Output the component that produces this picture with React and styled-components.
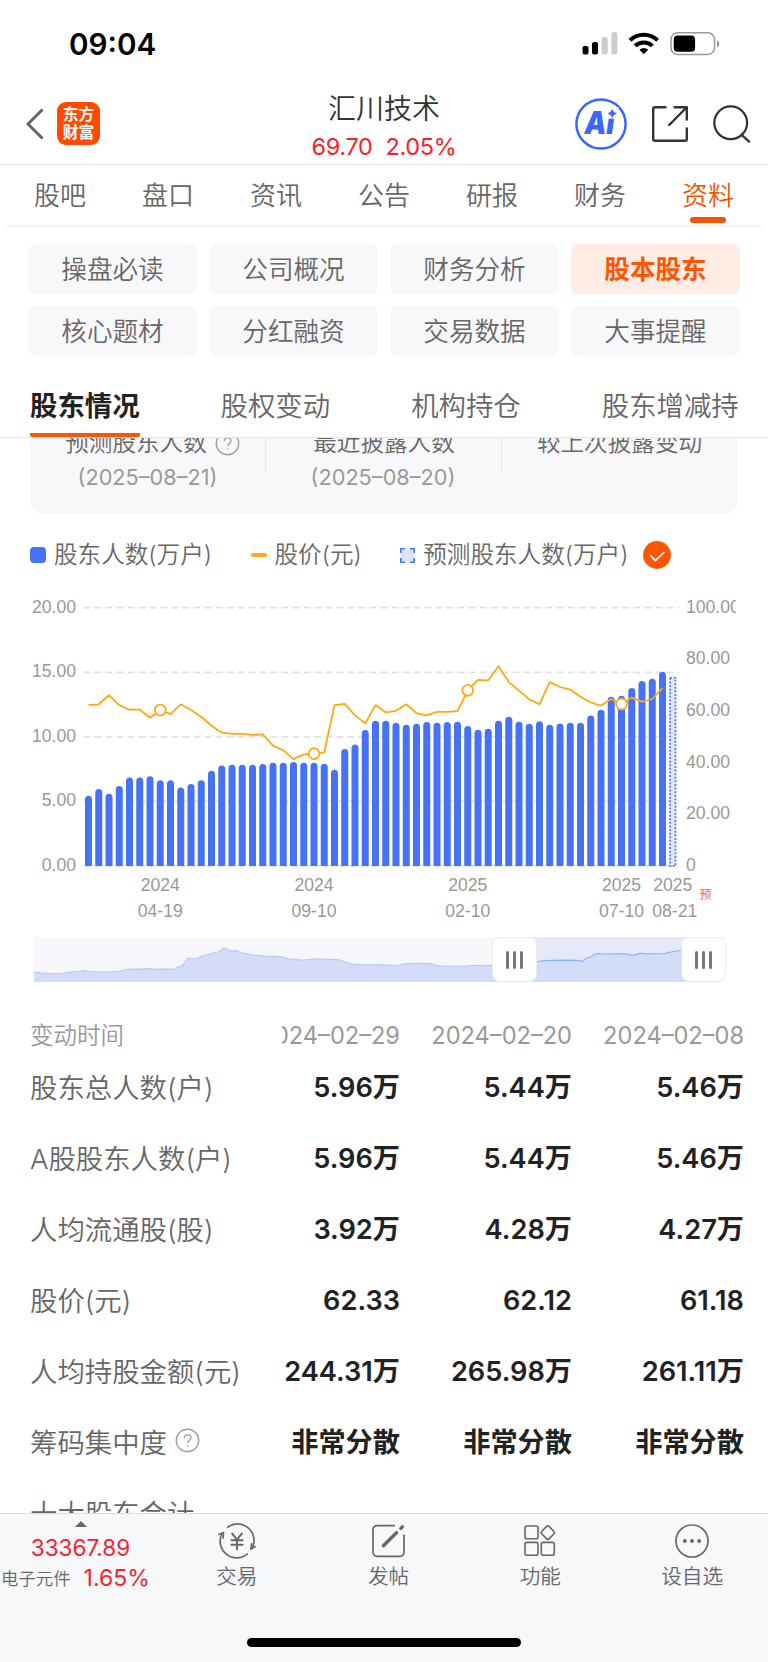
// App.jsx
import React from "react";
import styled, { createGlobalStyle } from "styled-components";

const TABS = ["股吧", "盘口", "资讯", "公告", "研报", "财务", "资料"];

const MENUS = [
  "操盘必读", "公司概况", "财务分析", "股本股东",
  "核心题材", "分红融资", "交易数据", "大事提醒",
];

const SUB_TABS = ["股东情况", "股权变动", "机构持仓", "股东增减持"];

const DATES = ["2024–02–29", "2024–02–20", "2024–02–08"];

const ROWS = [
  { label: "股东总人数(户)", values: ["5.96万", "5.44万", "5.46万"] },
  { label: "A股股东人数(户)", values: ["5.96万", "5.44万", "5.46万"] },
  { label: "人均流通股(股)", values: ["3.92万", "4.28万", "4.27万"] },
  { label: "股价(元)", values: ["62.33", "62.12", "61.18"] },
  { label: "人均持股金额(元)", values: ["244.31万", "265.98万", "261.11万"] },
  { label: "筹码集中度", help: true, values: ["非常分散", "非常分散", "非常分散"] },
  { label: "十大股东合计", values: [] },
];

// 股东人数(万户)
const HOLDERS = [
  5.44, 5.96, 5.6, 6.19, 6.86, 6.86, 6.94, 6.63, 6.63, 6.08, 6.35, 6.63,
  7.38, 7.79, 7.84, 7.84, 7.84, 7.89, 8.0, 8.0, 8.05, 8.0, 8.0, 7.92,
  7.45, 9.06, 9.41, 10.53, 11.25, 11.25, 11.09, 10.94, 11.01, 11.15, 11.09, 11.15,
  11.17, 10.84, 10.55, 10.63, 11.25, 11.56, 11.17, 11.01, 11.2, 10.94, 11.04, 11.09,
  11.09, 11.66, 12.1, 13.1, 13.18, 13.78, 14.32, 14.5, 15.04,
];
const FORECAST = 14.63;

// 股价(元)
const PRICES = [
  62.3, 62.6, 66.1, 62.3, 60.5, 60.5, 57.4, 60.4, 58.8, 62.6, 60.4, 57.8,
  54.3, 51.6, 51.2, 51.2, 50.8, 50.95, 46.6, 44.8, 41.4, 43.2, 43.5, 44,
  62.3, 62.8, 58.3, 55.2, 62.3, 59.5, 60.1, 62.6, 59.2, 58.3, 59.7, 59.7,
  60, 68, 72.1, 71.9, 77.3, 71.2, 67.9, 64.5, 62.6, 71.2, 69.3, 68.3,
  65.5, 63.3, 62.1, 64.65, 62.7, 65.2, 63.6, 64.65, 69,
];
const MARKS = [7, 22, 37, 52];

const X_LABELS = [
  { i: 7, year: "2024", day: "04-19" },
  { i: 22, year: "2024", day: "09-10" },
  { i: 37, year: "2025", day: "02-10" },
  { i: 52, year: "2025", day: "07-10" },
  { i: 57, year: "2025", day: "08-21", dx: 2 },
];

const BASE = 276;
const HEIGHT = 258.3;
const STEP = 10.25;
const xAt = (i) => 88.5 + i * STEP;
const yHolder = (v) => BASE - (v / 20) * HEIGHT;
const yPrice = (v) => BASE - (v / 100) * HEIGHT;

function barPath(x, top) {
  const r = 3.5;
  return `M${x - r} ${BASE}V${top + r}a${r} ${r} 0 0 1 ${r * 2} 0V${BASE}z`;
}

function Chart() {
  const line = PRICES.map((p, i) => `${xAt(i)},${yPrice(p).toFixed(1)}`).join(" ");
  return (
    <ChartSvg width="736" height="340" viewBox="0 0 736 340">
      {[20, 15, 10, 5, 0].map((v) => (
        <g key={v}>
          <line x1="83.5" x2="679" y1={yHolder(v)} y2={yHolder(v)} stroke="#e2e2e2" strokeWidth="1.7" strokeDasharray="7 4" />
          <text x="76" y={yHolder(v) + 5} textAnchor="end">{v.toFixed(2)}</text>
        </g>
      ))}
      {[100, 80, 60, 40, 20, 0].map((v) => (
        <text key={v} x="686" y={yPrice(v) + 5}>{v ? v.toFixed(2) : "0"}</text>
      ))}
      {HOLDERS.map((v, i) => (
        <path key={i} d={barPath(xAt(i), yHolder(v))} fill="#4673f6" />
      ))}
      <rect x={xAt(57) - 2.7} y={yHolder(FORECAST) + 0.7} width="5.4" height={BASE - yHolder(FORECAST) - 0.7} fill="#dfe8fd" stroke="#4673f6" strokeWidth="1.7" strokeDasharray="2 1.6" />
      <polyline points={line} fill="none" stroke="#ffa80f" strokeWidth="1.8" strokeLinejoin="round" />
      {MARKS.map((i) => (
        <circle key={i} cx={xAt(i)} cy={yPrice(PRICES[i])} r="5.4" fill="#fff" stroke="#ffa80f" strokeWidth="1.8" />
      ))}
      {X_LABELS.map((l) => (
        <g key={l.i} textAnchor="middle">
          <text x={xAt(l.i)} y="301">{l.year}</text>
          <text x={xAt(l.i) + (l.dx || 0)} y="326.5">{l.day}</text>
        </g>
      ))}
      <ForecastText x="699.5" y="308.5">预</ForecastText>
    </ChartSvg>
  );
}

const TREND_LEFT =
  "0,35 8,36 18,36.8 28,36.2 38,35 48,34.2 50,33.5 56,34.5 70,35 84,34.5 90,33 95,32 104,32.4 112,31.6 120,32.4 130,32 140,32.3 144,30 148,29 154,21 158,21.5 163,21.7 168,19 176,17 182,15.2 185,15 190,11 194,13 198,14 202,13.2 208,16 214,16.8 218,18 226,18.2 230,19.3 238,19.3 248,20 254,21.7 262,22.5 268,23.2 278,22 290,22 298,22.2 306,23 312,25.5 320,27.5 332,28 344,27.7 358,28.2 366,28 371,26.7 384,26.3 396,26.8 404,28.7 414,29.3 432,29 440,28.2 446,28.8 454,28.4 462,28.4 480,28";
const TREND_RIGHT =
  "480,27 488,26.8 492,27.4 498,27 504,24.5 510,23.6 528,23.2 544,23.4 548,24.5 552,21.5 556,20.3 560,17.5 564,16.5 572,17 590,16.8 598,18 602,17.7 606,16.2 612,16.8 630,16.6 637,15 650,13 669,12";

function Brush() {
  return (
    <BrushWrap>
      <svg width="691" height="45" viewBox="0 0 691 45">
        <rect width="691" height="45" fill="#f7f7fb" />
        <rect x="480" width="189" height="45" fill="#e5e9fa" />
        <polygon points={`0,45 ${TREND_LEFT} 480,45`} fill="#d4dcf9" />
        <polygon points={`480,45 ${TREND_RIGHT} 669,45`} fill="#d2ddf8" />
        <polyline points={TREND_LEFT} fill="none" stroke="#b4c7ec" strokeWidth="1.1" />
        <polyline points={TREND_RIGHT} fill="none" stroke="#8fb0f8" strokeWidth="1.2" />
      </svg>
      <Handle $left={458}><i /><i /><i /></Handle>
      <Handle $left={646.5}><i /><i /><i /></Handle>
    </BrushWrap>
  );
}

function HelpIcon() {
  return (
    <svg width="25" height="25" viewBox="0 0 25 25" fill="none" stroke="#a0a0a0" strokeWidth="1.4">
      <circle cx="12.5" cy="12.5" r="11.2" />
      <path d="M9.3 10.2c0-2 1.4-3.3 3.3-3.3s3.3 1.2 3.3 3c0 2.4-3.2 2.7-3.2 5.2" />
      <circle cx="12.6" cy="18" r="0.8" fill="#a0a0a0" stroke="none" />
    </svg>
  );
}

function StatusBar() {
  return (
    <Status>
      <Clock>09:04</Clock>
      <svg width="138" height="24" viewBox="0 0 138 24">
        <rect x="0.5" y="14" width="6" height="8.5" rx="2" />
        <rect x="10" y="10" width="6" height="12.5" rx="2" />
        <rect x="19.7" y="5" width="6" height="17.5" rx="2" fill="#ccc" />
        <rect x="29.4" y="0.3" width="6" height="22.2" rx="2" fill="#ccc" />
        <g fill="none" stroke="#000" strokeWidth="4">
          <path d="M48 8.3a20 20 0 0 1 27.6 0" />
          <path d="M53.2 13.9a12.3 12.3 0 0 1 17.2 0" />
        </g>
        <path d="M61.8 22.2l-4.4-4.4a6.4 6.4 0 0 1 8.8 0z" />
        <rect x="89" y="0.8" width="43.5" height="21.6" rx="6.5" fill="none" stroke="#999" strokeWidth="1.5" />
        <rect x="91.7" y="3.4" width="21.4" height="16.4" rx="4" />
        <path d="M135 8.2c3 1 3 6 0 7z" fill="#999" />
      </svg>
    </Status>
  );
}

function NavIcons() {
  return (
    <HeaderRight>
      <svg width="52" height="52" viewBox="0 0 52 52">
        <circle cx="26" cy="26" r="24.6" fill="none" stroke="#3a66fb" strokeWidth="2.5" />
        <AiText x="9.5" y="36" textLength="30" lengthAdjust="spacingAndGlyphs">Ai</AiText>
        <rect x="31.5" y="9" width="12" height="11.6" fill="#fff" />
        <path d="M37.2 11.4l1.4 2.7 2.7 1.4-2.7 1.4-1.4 2.7-1.4-2.7-2.7-1.4 2.7-1.4z" fill="#3a66fb" stroke="#3a66fb" strokeWidth="0.6" />
      </svg>
      <svg width="36" height="36" viewBox="0 0 36 36" fill="none" stroke="#333" strokeWidth="2.4" strokeLinecap="round" strokeLinejoin="round">
        <path d="M13.5 1.2H3a1.8 1.8 0 0 0-1.8 1.8v30A1.8 1.8 0 0 0 3 34.8h30a1.8 1.8 0 0 0 1.8-1.8V22.5" />
        <path d="M22.5 1.2h12.3v12.3M34.5 1.5L17.2 19" />
      </svg>
      <svg width="40" height="38" viewBox="0 0 40 38" fill="none" stroke="#333" strokeWidth="2.3" strokeLinecap="round">
        <circle cx="18.7" cy="17.8" r="16.4" />
        <path d="M29.7 29.8l7.4 6.8" />
      </svg>
    </HeaderRight>
  );
}

function TradeIcon() {
  return (
    <svg width="40" height="36" viewBox="0 0 40 36" fill="none" stroke="#666" strokeWidth="1.7">
      <path d="M10.2 4.6a16.5 16.5 0 0 1 25.4 19.6l-1.6 2.2" />
      <path d="M30.8 30.6A16.6 16.6 0 0 1 5 10.6" />
      <path d="M1.2 11.4l5.2-1.8-.2 6.2" strokeWidth="1.6" />
      <path d="M38.8 23.4l-4.8 2.2.6-5.6" strokeWidth="1.6" />
      <path d="M14.6 9.8l5.4 7 5.4-7M20 16.8v10.4M13.6 17.2h12.8M13.6 21.8h12.8" strokeWidth="1.9" />
    </svg>
  );
}

function PostIcon() {
  return (
    <svg width="34" height="36" viewBox="0 0 34 36" fill="none" stroke="#666" strokeWidth="1.7">
      <path d="M23 2.7H5a4 4 0 0 0-4 4v22.6a4 4 0 0 0 4 4h23a4 4 0 0 0 4-4V11.6" />
      <path d="M11.4 22.8l13.2-13.2" strokeWidth="3.4" strokeLinecap="round" />
      <path d="M28.9 5.4l1.5-1.5" strokeWidth="3.4" strokeLinecap="round" />
    </svg>
  );
}

function GridIcon() {
  return (
    <svg width="34" height="36" viewBox="0 0 34 36" fill="none" stroke="#666" strokeWidth="1.6">
      <rect x="2" y="3" width="13" height="12.8" rx="2" />
      <rect x="2" y="19.4" width="13" height="12.8" rx="2" />
      <rect x="18.3" y="19.4" width="13" height="12.8" rx="2" />
      <rect x="19.6" y="4.4" width="10.4" height="10.4" rx="1.6" transform="rotate(45 24.8 9.6)" />
    </svg>
  );
}

function MoreIcon() {
  return (
    <svg width="34" height="36" viewBox="0 0 34 36">
      <circle cx="17" cy="18" r="16" fill="none" stroke="#666" strokeWidth="1.7" />
      <circle cx="9.8" cy="18" r="1.9" fill="#666" />
      <circle cx="17" cy="18" r="1.9" fill="#666" />
      <circle cx="24.2" cy="18" r="1.9" fill="#666" />
    </svg>
  );
}

function App() {
  return (
    <Page>
      <GlobalStyle />
      <StatusBar />
      <Header>
        <HeaderLeft>
          <svg width="18" height="32" viewBox="0 0 18 32" fill="none" stroke="#666" strokeWidth="3">
            <path d="M16.5 1.5L2 16l14.5 14.5" />
          </svg>
          <Logo>东方<br />财富</Logo>
        </HeaderLeft>
        <HeaderCenter>
          <StockName>汇川技术</StockName>
          <StockPrice>
            <span>69.70</span>
            <span>2.05%</span>
          </StockPrice>
        </HeaderCenter>
        <NavIcons />
      </Header>

      <TabBar>
        {TABS.map((t) => (
          <Tab key={t} $active={t === "资料"}>{t}</Tab>
        ))}
      </TabBar>

      <MenuGrid>
        {MENUS.map((m) => (
          <MenuItem key={m} $active={m === "股本股东"}>{m}</MenuItem>
        ))}
      </MenuGrid>

      <SubTabBar>
        {SUB_TABS.map((t, i) => (
          <SubTab key={t} $active={i === 0}>{t}</SubTab>
        ))}
      </SubTabBar>

      <Content>
        <Card>
          <CardCol>
            <CardTitle $shift={10}>预测股东人数<HelpIcon /></CardTitle>
            <CardDate>(2025–08–21)</CardDate>
          </CardCol>
          <CardCol>
            <CardTitle $shift={2}>最近披露人数</CardTitle>
            <CardDate>(2025–08–20)</CardDate>
          </CardCol>
          <CardCol>
            <CardTitle>较上次披露变动</CardTitle>
          </CardCol>
        </Card>

        <Legend>
          <BarMark />
          <LegendText $gap={38.5}>股东人数(万户)</LegendText>
          <LineMark />
          <LegendText $gap={38.5}>股价(元)</LegendText>
          <svg width="15" height="15" viewBox="0 0 15 15">
            <rect x="1" y="1" width="13" height="13" fill="#dce4fd" />
            <path d="M0.8 5V0.8H5M10 0.8h4.2V5M14.2 10v4.2H10M5 14.2H0.8V10" fill="none" stroke="#4673f6" strokeWidth="1.6" />
          </svg>
          <LegendText $gap={15}>预测股东人数(万户)</LegendText>
          <svg width="28" height="28" viewBox="0 0 28 28">
            <circle cx="14" cy="14" r="13.9" fill="#ff5500" />
            <path d="M7 14.2l5.4 5.4 9-8.6" fill="none" stroke="#fff" strokeWidth="1.7" />
          </svg>
        </Legend>

        <Chart />
        <Brush />

        <Table>
          <LabelCol>
            <LabelHead>变动时间</LabelHead>
            {ROWS.map((r) => (
              <Label key={r.label}>{r.label}{r.help && <HelpIcon />}</Label>
            ))}
          </LabelCol>
          <Scroller>
            {DATES.map((d, i) => (
              <ValueCol key={d}>
                <ValueHead>{d}</ValueHead>
                {ROWS.map((r) => (
                  <Value key={r.label}>{r.values[i]}</Value>
                ))}
              </ValueCol>
            ))}
          </Scroller>
        </Table>
      </Content>

      <BottomBar>
        <IndexBox>
          <Arrow />
          <IndexValue>33367.89</IndexValue>
          <IndexRow>
            <IndexName>电子元件</IndexName>
            <IndexRate>1.65%</IndexRate>
          </IndexRow>
        </IndexBox>
        <Action><TradeIcon />交易</Action>
        <Action><PostIcon />发帖</Action>
        <Action><GridIcon />功能</Action>
        <Action><MoreIcon />设自选</Action>
      </BottomBar>
      <HomeArea>
        <HomeBar />
      </HomeArea>
    </Page>
  );
}

export default App;

const GlobalStyle = createGlobalStyle`
  * {
    box-sizing: border-box;
  }
  body {
    margin: 0;
    background: #fff;
    font-family: Inter, "Noto Sans CJK SC", sans-serif;
    font-weight: 350;
    color: #666;
  }
  svg {
    display: block;
    flex-shrink: 0;
  }
`;

const Page = styled.div`
  width: 768px;
  height: 1662px;
  display: flex;
  flex-direction: column;
  overflow: hidden;
  background: #fff;
`;

const Status = styled.div`
  height: 86px;
  flex-shrink: 0;
  display: flex;
  align-items: center;
  justify-content: space-between;
  padding: 2px 48px 0 69px;
`;

const Clock = styled.span`
  font-size: 29.6px;
  font-weight: 600;
  color: #000;
`;

const Header = styled.header`
  height: 79px;
  flex-shrink: 0;
  display: grid;
  grid-template-columns: 1fr auto 1fr;
  grid-template-rows: 78px;
  border-bottom: 1px solid #e8e8e8;
`;

const HeaderLeft = styled.div`
  display: flex;
  align-items: center;
  gap: 13px;
  padding: 0 0 3px 26px;
`;

const Logo = styled.div`
  width: 43px;
  height: 43px;
  display: flex;
  align-items: center;
  justify-content: center;
  border-radius: 9px;
  background: #ff4a00;
  color: #fff;
  font-size: 15.8px;
  font-weight: 700;
  line-height: 17.5px;
`;

const HeaderCenter = styled.div`
  display: flex;
  flex-direction: column;
  align-items: center;
  padding-top: 4px;
`;

const StockName = styled.div`
  font-size: 28px;
  line-height: 38px;
  color: #333;
`;

const StockPrice = styled.div`
  display: flex;
  gap: 13px;
  font-size: 23.5px;
  font-weight: 400;
  line-height: 38px;
  letter-spacing: -0.35px;
  color: #f5222d;
`;

const HeaderRight = styled.div`
  display: flex;
  align-items: center;
  justify-content: flex-end;
  gap: 24.5px;
  padding: 0 16px 3px 0;
`;

const AiText = styled.text`
  font-family: Inter, sans-serif;
  font-size: 31px;
  font-weight: 900;
  font-style: italic;
  fill: #3a66fb;
`;

const TabBar = styled.nav`
  height: 62px;
  flex-shrink: 0;
  display: flex;
  margin: 0 6px;
  border-bottom: 2px solid #f2f2f2;
`;

const Tab = styled.div`
  flex: 1;
  display: flex;
  flex-direction: column;
  align-items: center;
  padding-top: 11px;
  font-size: 26px;
  line-height: 40px;
  color: ${({ $active }) => ($active ? "#ee5500" : "#666")};

  &::after {
    content: "";
    width: 36px;
    height: 6px;
    margin-top: 1px;
    border-radius: 3px;
    background: ${({ $active }) => ($active ? "#ee5500" : "transparent")};
  }
`;

const MenuGrid = styled.div`
  flex-shrink: 0;
  display: grid;
  grid-template-columns: repeat(4, 1fr);
  gap: 12px;
  padding: 17px 28px 0;
`;

const MenuItem = styled.div`
  height: 50px;
  display: flex;
  align-items: center;
  justify-content: center;
  padding-bottom: 4px;
  border-radius: 7px;
  font-size: 25.6px;
  font-weight: ${({ $active }) => ($active ? 700 : 350)};
  color: ${({ $active }) => ($active ? "#ff5500" : "#666")};
  background: ${({ $active }) => ($active ? "#ffece5" : "#f8f8fb")};
`;

const SubTabBar = styled.nav`
  height: 82px;
  flex-shrink: 0;
  display: flex;
  align-items: flex-end;
  gap: 81px;
  padding-left: 30px;
  border-bottom: 1px solid #e8e8e8;
`;

const SubTab = styled.div`
  height: 57px;
  font-size: 27.4px;
  line-height: 52px;
  white-space: nowrap;
  font-weight: ${({ $active }) => ($active ? 700 : 350)};
  color: ${({ $active }) => ($active ? "#222" : "#666")};
  border-bottom: 4px solid ${({ $active }) => ($active ? "#ff5500" : "transparent")};
  border-radius: 2px;
`;

const Content = styled.main`
  height: 1075px;
  flex-shrink: 0;
  overflow: hidden;
`;

/* top part of the card is scrolled under the tabs */
const Card = styled.section`
  height: 146px;
  display: grid;
  grid-template-columns: 235px 236px 237px;
  align-items: end;
  margin: -70px 30px 0;
  padding-bottom: 20px;
  border-radius: 14px;
  background: #f8f8fb;
`;

const CardCol = styled.div`
  height: 69px;
  display: flex;
  flex-direction: column;
  align-items: center;
  position: relative;

  & + &::before {
    content: "";
    position: absolute;
    left: 0;
    top: 0;
    width: 1px;
    height: 48px;
    background: #e4e4e8;
  }
`;

const CardTitle = styled.div`
  display: flex;
  align-items: center;
  gap: 8px;
  padding-left: ${({ $shift = 0 }) => $shift}px;
  font-size: 23.6px;
  line-height: 36px;
`;

const CardDate = styled.div`
  font-size: 21.7px;
  font-weight: 400;
  line-height: 33px;
  color: #999;
`;

const Legend = styled.div`
  height: 40px;
  display: flex;
  align-items: center;
  margin: 21px 0 0 30px;
`;

const LegendText = styled.span`
  margin-left: 8px;
  margin-right: ${({ $gap }) => $gap}px;
  font-size: 23.6px;
  line-height: 36px;
  white-space: nowrap;
`;

const BarMark = styled.i`
  width: 16px;
  height: 16px;
  border-radius: 4px;
  background: #4673f6;
`;

const LineMark = styled.i`
  width: 16px;
  height: 4px;
  border-radius: 2px;
  background: #ffa80f;
`;

const ChartSvg = styled.svg`
  margin-top: 15px;
  font-family: "Liberation Sans", Arial, sans-serif;
  font-size: 17.6px;
  fill: #999;
`;

const ForecastText = styled.text`
  font-family: "Noto Sans CJK SC", sans-serif;
  font-size: 12px;
  font-weight: 400;
  fill: #ee6a28;
`;

const BrushWrap = styled.div`
  position: relative;
  width: 691px;
  margin: 7px 0 0 34px;
`;

const Handle = styled.div`
  position: absolute;
  top: 0;
  left: ${({ $left }) => $left}px;
  width: 45px;
  height: 45px;
  display: flex;
  align-items: center;
  justify-content: center;
  gap: 4px;
  border: 1.5px solid #ececec;
  border-radius: 8px;
  background: #fff;

  i {
    width: 3px;
    height: 18px;
    border-radius: 1.5px;
    background: #777;
  }
`;

const Table = styled.section`
  display: flex;
  padding: 36px 24px 0 30px;
`;

const LabelCol = styled.div`
  width: 252px;
  flex-shrink: 0;
`;

const LabelHead = styled.div`
  height: 32px;
  font-size: 23.5px;
  line-height: 35px;
  color: #999;
`;

const Label = styled.div`
  height: 71px;
  display: flex;
  align-items: center;
  gap: 8px;
  font-size: 27.4px;
  white-space: nowrap;
`;

const Scroller = styled.div`
  flex: 1;
  display: flex;
  justify-content: flex-end;
  overflow: hidden;
`;

const ValueCol = styled.div`
  width: 172px;
  flex-shrink: 0;
  text-align: right;
`;

const ValueHead = styled.div`
  height: 34px;
  font-size: 23.6px;
  font-weight: 400;
  line-height: 35px;
  color: #999;
`;

const Value = styled.div`
  height: 71px;
  font-size: 27.2px;
  font-weight: 600;
  line-height: 71px;
  color: #222;
`;

const BottomBar = styled.footer`
  height: 95px;
  flex-shrink: 0;
  display: flex;
  border-top: 1px solid #dcdde0;
  background: #f7f8fa;
`;

const IndexBox = styled.div`
  width: 161px;
  display: flex;
  flex-direction: column;
  align-items: center;
  padding-top: 7px;
`;

const Arrow = styled.i`
  border: 6px solid transparent;
  border-top: 0;
  border-bottom-color: #666;
`;

const IndexValue = styled.div`
  margin-top: 5px;
  font-size: 22.5px;
  font-weight: 400;
  line-height: 31px;
  color: #f5222d;
`;

const IndexRow = styled.div`
  width: 100%;
  display: flex;
  align-items: center;
  gap: 13px;
  padding-left: 1px;
  line-height: 31px;
`;

const IndexName = styled.span`
  font-size: 17.4px;
`;

const IndexRate = styled.span`
  font-size: 23px;
  font-weight: 400;
  color: #f5222d;
`;

const Action = styled.div`
  flex: 1;
  display: flex;
  flex-direction: column;
  align-items: center;
  gap: 3px;
  padding-top: 9px;
  font-size: 20.6px;
  line-height: 30px;
`;

const HomeArea = styled.div`
  flex: 1;
  display: flex;
  justify-content: center;
  padding-top: 30px;
  background: #f7f8fa;
`;

const HomeBar = styled.div`
  width: 274px;
  height: 9px;
  border-radius: 5px;
  background: #000;
`;
